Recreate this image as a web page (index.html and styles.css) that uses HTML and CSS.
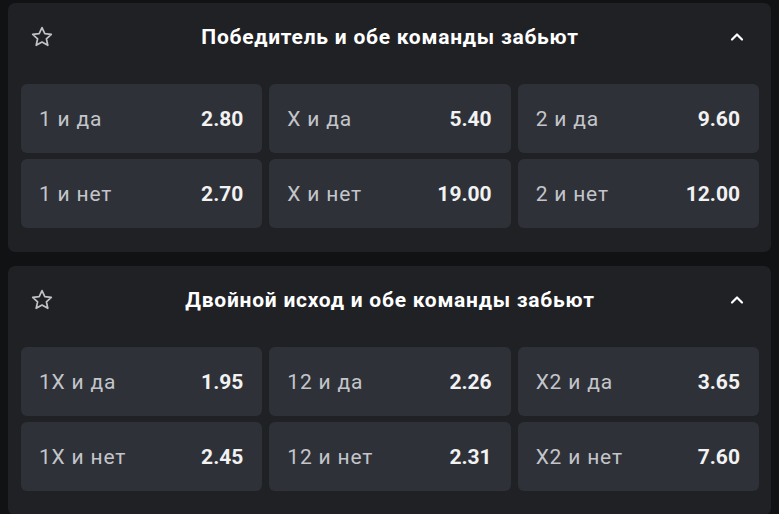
FILE: index.html
```html
<!DOCTYPE html>
<html lang="ru">
<head>
<meta charset="utf-8">
<link rel="stylesheet" href="styles.css">
</head>
<body>
<div class="page">
  <section class="market">
    <div class="market-head">
      <svg class="star" viewBox="0 0 24 24" width="24" height="24"><path d="M12 2.6l2.8 6 6.5.7-4.9 4.5 1.4 6.5L12 17l-5.8 3.3 1.4-6.5-4.9-4.5 6.5-.7z" fill="none" stroke="currentColor" stroke-width="1.7" stroke-linejoin="round"/></svg>
      <h2 class="title">Победитель и обе команды забьют</h2>
      <svg class="chev" viewBox="0 0 14 10" width="14" height="10"><path d="M2 7.5l5-5 5 5" fill="none" stroke="currentColor" stroke-width="2.2" stroke-linecap="round" stroke-linejoin="round"/></svg>
    </div>
    <div class="grid">
      <div class="cell"><span class="label">1 и да</span><span class="odd">2.80</span></div>
      <div class="cell"><span class="label">X и да</span><span class="odd">5.40</span></div>
      <div class="cell"><span class="label">2 и да</span><span class="odd">9.60</span></div>
      <div class="cell"><span class="label">1 и нет</span><span class="odd">2.70</span></div>
      <div class="cell"><span class="label">X и нет</span><span class="odd">19.00</span></div>
      <div class="cell"><span class="label">2 и нет</span><span class="odd">12.00</span></div>
    </div>
  </section>
  <section class="market">
    <div class="market-head">
      <svg class="star" viewBox="0 0 24 24" width="24" height="24"><path d="M12 2.6l2.8 6 6.5.7-4.9 4.5 1.4 6.5L12 17l-5.8 3.3 1.4-6.5-4.9-4.5 6.5-.7z" fill="none" stroke="currentColor" stroke-width="1.7" stroke-linejoin="round"/></svg>
      <h2 class="title">Двойной исход и обе команды забьют</h2>
      <svg class="chev" viewBox="0 0 14 10" width="14" height="10"><path d="M2 7.5l5-5 5 5" fill="none" stroke="currentColor" stroke-width="2.2" stroke-linecap="round" stroke-linejoin="round"/></svg>
    </div>
    <div class="grid">
      <div class="cell"><span class="label">1X и да</span><span class="odd">1.95</span></div>
      <div class="cell"><span class="label">12 и да</span><span class="odd">2.26</span></div>
      <div class="cell"><span class="label">X2 и да</span><span class="odd">3.65</span></div>
      <div class="cell"><span class="label">1X и нет</span><span class="odd">2.45</span></div>
      <div class="cell"><span class="label">12 и нет</span><span class="odd">2.31</span></div>
      <div class="cell"><span class="label">X2 и нет</span><span class="odd">7.60</span></div>
    </div>
  </section>
</div>
</body>
</html>
```
FILE: styles.css
```css
html, body {
  margin: 0;
  padding: 0;
  background: #111214;
  font-family: Roboto, "Noto Sans", sans-serif;
  overflow: hidden;
}
.page {
  padding: 3px 8px 0 8px;
  display: flex;
  flex-direction: column;
  gap: 14px;
}
.market {
  background: #1f2125;
  border-radius: 7px;
  padding: 0 12px 24px 13px;
}
.market-head {
  height: 68px;
  display: grid;
  grid-template-columns: 1fr auto 1fr;
  align-items: center;
  margin-bottom: 13px;
}
.star {
  color: #c0c2c6;
  margin-left: 9px;
  justify-self: start;
}
.title {
  margin: 0;
  text-align: center;
  color: #ffffff;
  font-size: 21px;
  font-weight: 700;
  letter-spacing: 0.75px;
  white-space: nowrap;
}
.chev {
  color: #ffffff;
  margin-right: 15px;
  justify-self: end;
}
.grid {
  display: grid;
  grid-template-columns: repeat(3, 1fr);
  column-gap: 7px;
  row-gap: 6px;
}
.cell {
  height: 69px;
  background: #2e3138;
  border-radius: 6px;
  display: flex;
  align-items: center;
  justify-content: space-between;
  padding: 0 19px 0 18px;
  font-size: 21px;
}
.label {
  color: #c3c5ca;
  letter-spacing: 0.8px;
}
.odd {
  color: #f2f2f2;
  font-weight: 700;
}
```
